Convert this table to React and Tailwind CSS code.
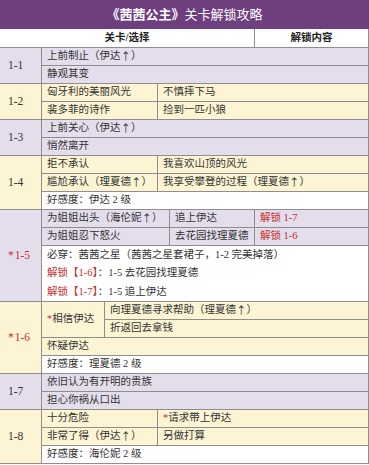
const LINE = "border-[#8e8e8e]";

function Row({ bg = "bg-[#e4deec]", children }) {
  return (
    <div className={`flex h-[18px] shrink-0 border-b border-[#8e8e8e] ${bg}`}>
      {children}
    </div>
  );
}

function Cell({ w = "flex-1", last, children }) {
  return (
    <div
      className={`flex h-full items-center pl-[5px] whitespace-nowrap ${w} ${
        last ? "" : "border-r border-[#8e8e8e]"
      }`}
    >
      {children}
    </div>
  );
}

function Section({ label, star, bg, children }) {
  return (
    <div className="flex">
      <div
        className={`flex w-[42px] shrink-0 items-center border-r border-b border-[#8e8e8e] pl-[8px] text-[11.5px] ${bg} ${
          star ? "text-[#c4302e]" : "text-[#333]"
        }`}
      >
        {star && <span className="mr-[1px]">*</span>}
        {label}
      </div>
      <div className="flex flex-1 flex-col">{children}</div>
    </div>
  );
}

const Red = ({ children }) => <span className="text-[#c8302e]">{children}</span>;
// arrow glyph in the CJK face, the serif one is too small
const Up = () => <span className="font-['Noto_Sans_CJK_SC',sans-serif]">↑</span>;

export default function App() {
  const lav = "bg-[#e4deec]";
  const cream = "bg-[#fdf4d4]";
  const white = "bg-white";

  return (
    <div className="w-[369px] bg-white font-['Liberation_Serif','Noto_Sans_CJK_SC',serif] text-[10.5px] leading-none text-[#333]">
      {/* title */}
      <div className="flex h-[29px] items-center justify-center bg-[#6f3e7e] text-[13px] text-white">
        <span className="font-semibold">《茜茜公主》</span>
        <span>关卡解锁攻略</span>
      </div>

      <div className={`border-r ${LINE}`}>
        {/* header */}
        <div className="flex h-[19px] border-b border-[#8e8e8e] bg-white font-bold text-[#222]">
          <div className="flex w-[255px] items-center justify-center border-r border-[#8e8e8e]">关卡/选择</div>
          <div className="flex flex-1 items-center justify-center">解锁内容</div>
        </div>

        <Section label="1-1" bg={lav}>
          <Row bg={lav}><Cell last>上前制止（伊达<Up />）</Cell></Row>
          <Row bg={lav}><Cell last>静观其变</Cell></Row>
        </Section>

        <Section label="1-2" bg={cream}>
          <Row bg={cream}>
            <Cell w="w-[116px]">匈牙利的美丽风光</Cell>
            <Cell last>不慎摔下马</Cell>
          </Row>
          <Row bg={cream}>
            <Cell w="w-[116px]">裴多菲的诗作</Cell>
            <Cell last>捡到一匹小狼</Cell>
          </Row>
        </Section>

        <Section label="1-3" bg={lav}>
          <Row bg={lav}><Cell last>上前关心（伊达<Up />）</Cell></Row>
          <Row bg={lav}><Cell last>悄然离开</Cell></Row>
        </Section>

        <Section label="1-4" bg={cream}>
          <Row bg={cream}>
            <Cell w="w-[116px]">拒不承认</Cell>
            <Cell last>我喜欢山顶的风光</Cell>
          </Row>
          <Row bg={cream}>
            <Cell w="w-[116px]">尴尬承认（理夏德<Up />）</Cell>
            <Cell last>我享受攀登的过程（理夏德<Up />）</Cell>
          </Row>
          <Row bg={white}><Cell last>好感度：伊达 2 级</Cell></Row>
        </Section>

        <Section label="1-5" star bg={lav}>
          <Row bg={lav}>
            <Cell w="w-[128px]">为姐姐出头（海伦妮<Up /> ）</Cell>
            <Cell w="w-[85px]">追上伊达</Cell>
            <Cell last><Red>解锁 1-7</Red></Cell>
          </Row>
          <Row bg={lav}>
            <Cell w="w-[128px]">为姐姐忍下怒火</Cell>
            <Cell w="w-[85px]">去花园找理夏德</Cell>
            <Cell last><Red>解锁 1-6</Red></Cell>
          </Row>
          <div className="flex h-[56px] flex-col justify-center border-b border-[#8e8e8e] bg-white pl-[5px] leading-[18.5px]">
            <div>必穿：茜茜之星（茜茜之星套裙子，1-2 完美掉落）</div>
            <div><Red>解锁【1-6】</Red>：1-5 去花园找理夏德</div>
            <div><Red>解锁【1-7】</Red>：1-5 追上伊达</div>
          </div>
        </Section>

        <Section label="1-6" star bg={cream}>
          <div className="flex">
            <div className="flex h-[36px] w-[63px] shrink-0 items-center border-r border-b border-[#8e8e8e] bg-[#fdf4d4] pl-[5px]">
              <Red>*</Red>相信伊达
            </div>
            <div className="flex flex-1 flex-col">
              <Row bg={cream}><Cell last>向理夏德寻求帮助（理夏德<Up />）</Cell></Row>
              <Row bg={cream}><Cell last>折返回去拿钱</Cell></Row>
            </div>
          </div>
          <Row bg={cream}><Cell last>怀疑伊达</Cell></Row>
          <Row bg={white}><Cell last>好感度：理夏德 2 级</Cell></Row>
        </Section>

        <Section label="1-7" bg={lav}>
          <Row bg={lav}><Cell last>依旧认为有开明的贵族</Cell></Row>
          <Row bg={lav}><Cell last>担心你祸从口出</Cell></Row>
        </Section>

        <Section label="1-8" bg={cream}>
          <Row bg={cream}>
            <Cell w="w-[116px]">十分危险</Cell>
            <Cell last><Red>*</Red>请求带上伊达</Cell>
          </Row>
          <Row bg={cream}>
            <Cell w="w-[116px]">非常了得（伊达<Up />）</Cell>
            <Cell last>另做打算</Cell>
          </Row>
          <Row bg={white}><Cell last>好感度：海伦妮 2 级</Cell></Row>
        </Section>
      </div>
    </div>
  );
}
